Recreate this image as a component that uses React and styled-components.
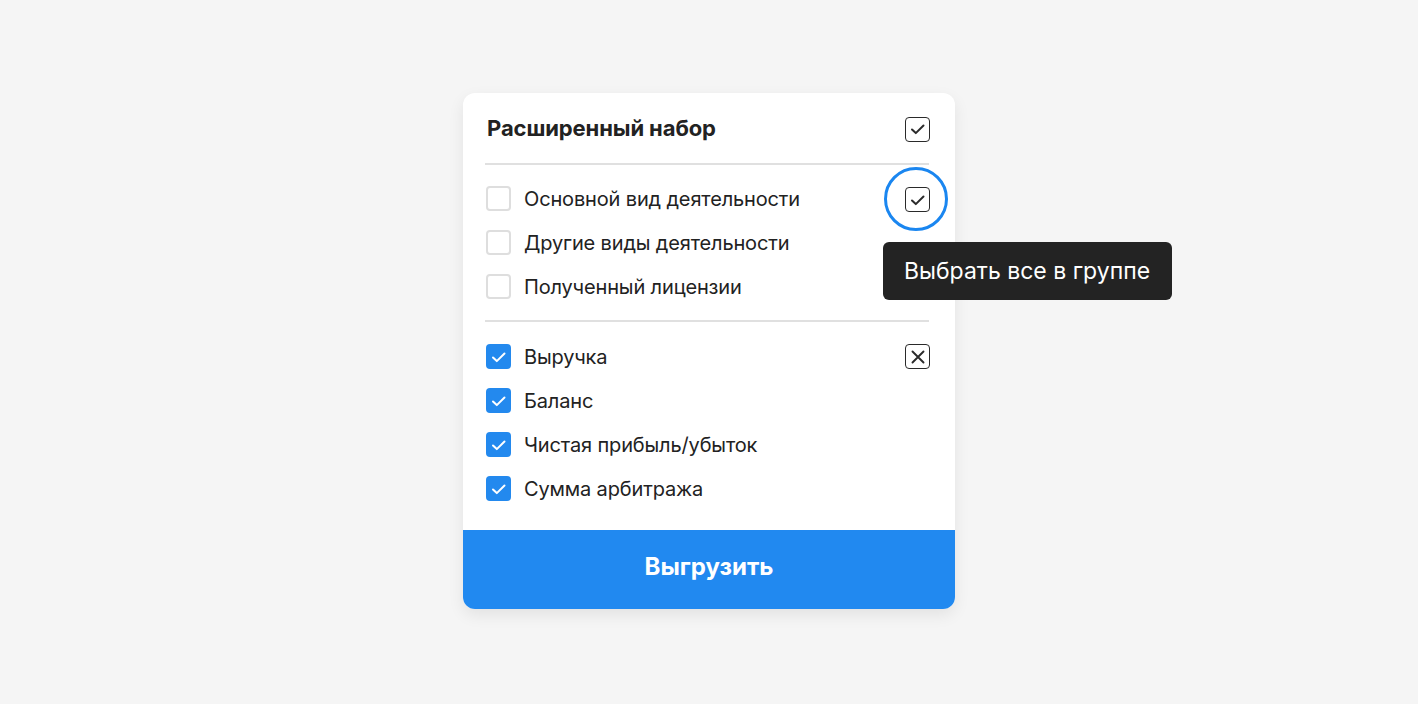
import styled, { createGlobalStyle } from "styled-components";

const GlobalStyle = createGlobalStyle`
  html, body {
    margin: 0;
    padding: 0;
    background: #f5f5f5;
    font-family: Inter, "Noto Sans", sans-serif;
  }
`

const Page = styled.div`
  min-height: 100vh;
  box-sizing: border-box;
  padding-bottom: 3px;
  display: flex;
  align-items: center;
  justify-content: center;
`

const Card = styled.div`
  width: 492px;
  background: #fff;
  border-radius: 12px;
  box-shadow: 0 6px 16px rgba(0, 0, 0, 0.08);
  display: flex;
  flex-direction: column;
`

const Header = styled.div`
  display: flex;
  align-items: center;
  justify-content: space-between;
  padding: 24px 25px 21px 24px;
`

const Title = styled.div`
  font-size: 22px;
  line-height: 24px;
  font-weight: 700;
  color: #222;
  letter-spacing: -0.1px;
  margin-top: -2px;
`

const Divider = styled.div`
  height: 2px;
  background: #e0e0e0;
  margin: 0 26px 0 22px;
`

const Group = styled.div`
  display: flex;
  flex-direction: column;
  padding: ${(p) => p.$pad};
`

const Row = styled.div`
  height: 44px;
  display: flex;
  align-items: center;
  gap: 13px;
  padding: 0 25px 0 23px;
`

const Box = styled.div`
  width: 25px;
  height: 25px;
  box-sizing: border-box;
  border-radius: 4px;
  border: ${(p) => (p.$checked ? "none" : "2px solid #dedede")};
  background: ${(p) => (p.$checked ? "#2389ee" : "#fff")};
  display: flex;
  align-items: center;
  justify-content: center;
  flex-shrink: 0;
`

const Label = styled.span`
  font-size: 20px;
  letter-spacing: -0.15px;
  color: #222;
  flex: 1;
`

const ActionBox = styled.div`
  width: 25px;
  height: 25px;
  box-sizing: border-box;
  border: 1.5px solid #2a2a2a;
  border-radius: 4px;
  display: flex;
  align-items: center;
  justify-content: center;
  position: relative;
  margin-top: ${(p) => p.$shift || 0}px;
`

const Ring = styled.div`
  position: absolute;
  left: -22px;
  top: -21px;
  width: 64px;
  height: 64px;
  box-sizing: border-box;
  border: 3px solid #1a86f0;
  border-radius: 50%;
  pointer-events: none;
`

const Tooltip = styled.div`
  position: absolute;
  left: -23px;
  top: 54px;
  width: 289px;
  height: 58px;
  box-sizing: border-box;
  background: #232323;
  color: #fff;
  border-radius: 6px;
  font-size: 23px;
  padding-left: 21px;
  display: flex;
  align-items: center;
  white-space: nowrap;
  z-index: 2;
`

const Button = styled.button`
  margin-top: 19px;
  height: 79px;
  padding: 0 0 5px;
  border: none;
  background: #2189f0;
  color: #fff;
  font-family: inherit;
  font-size: 24px;
  font-weight: 700;
  border-radius: 0 0 12px 12px;
  cursor: pointer;
`

const Tick = ({ color = "#fff" }) => (
  <svg width="22" height="22" viewBox="0 0 22 22" fill="none">
    <path d="M5 11.5l3.8 3.6L16.5 7.5" stroke={color} strokeWidth="2" strokeLinecap="round" strokeLinejoin="round" />
  </svg>
)

const Cross = () => (
  <svg width="22" height="22" viewBox="0 0 22 22" fill="none">
    <path d="M5.5 5.5l11 11M16.5 5.5l-11 11" stroke="#2a2a2a" strokeWidth="1.9" strokeLinecap="round" />
  </svg>
)

const groupOne = ["Основной вид деятельности", "Другие виды деятельности", "Полученный лицензии"]
const groupTwo = ["Выручка", "Баланс", "Чистая прибыль/убыток", "Сумма арбитража"]

export default function App() {
  return (
    <Page>
      <GlobalStyle />
      <Card>
        <Header>
          <Title>Расширенный набор</Title>
          <ActionBox>
            <Tick color="#2a2a2a" />
          </ActionBox>
        </Header>
        <Divider />
        <Group $pad="12px 0 11px">
          {groupOne.map((item, index) => (
            <Row key={item}>
              <Box />
              <Label>{item}</Label>
              {index === 0 && (
                <ActionBox $shift={2}>
                  <Tick color="#2a2a2a" />
                  <Ring />
                  <Tooltip>Выбрать все в группе</Tooltip>
                </ActionBox>
              )}
            </Row>
          ))}
        </Group>
        <Divider />
        <Group $pad="13px 0 0">
          {groupTwo.map((item, index) => (
            <Row key={item}>
              <Box $checked>
                <Tick />
              </Box>
              <Label>{item}</Label>
              {index === 0 && (
                <ActionBox>
                  <Cross />
                </ActionBox>
              )}
            </Row>
          ))}
        </Group>
        <Button>Выгрузить</Button>
      </Card>
    </Page>
  )
}
